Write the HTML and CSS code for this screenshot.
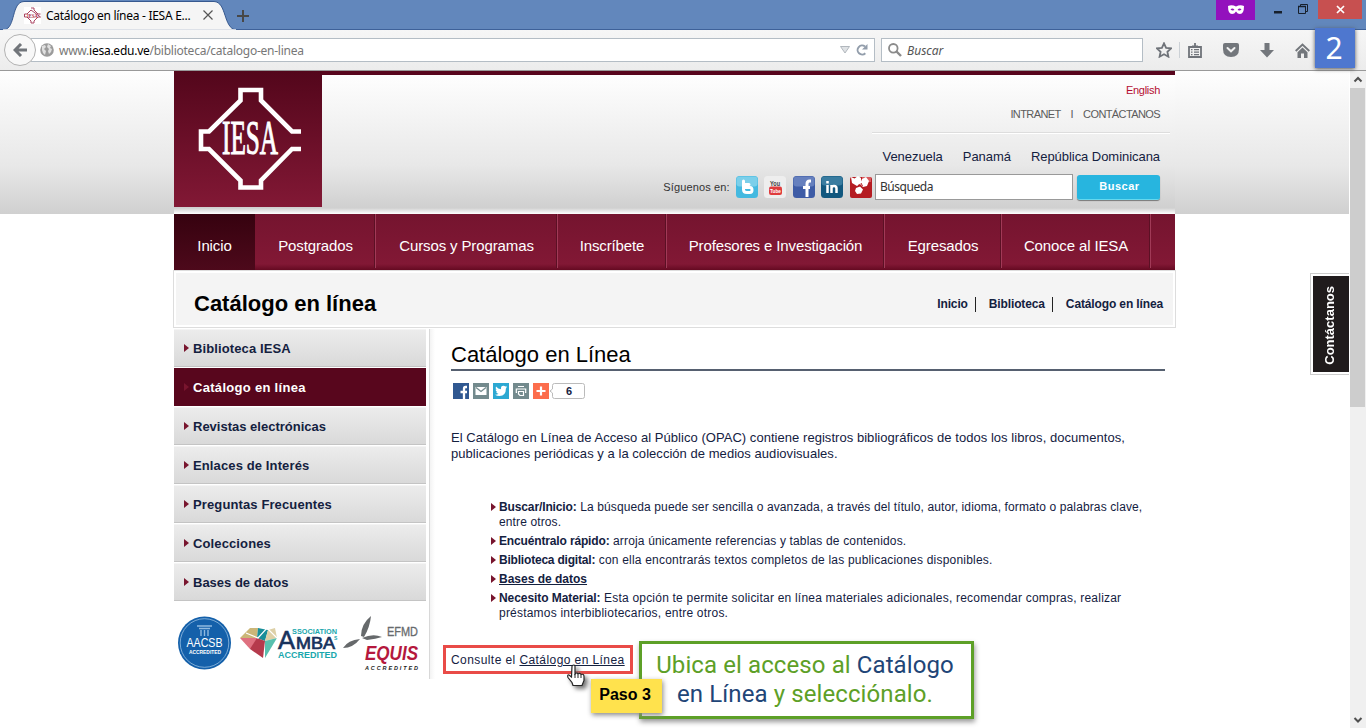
FILE: index.html
```html
<!DOCTYPE html>
<html lang="es">
<head>
<meta charset="utf-8">
<title>Catálogo en línea - IESA</title>
<link rel="stylesheet" href="styles.css">
</head>
<body>
<header class="titlebar">
  <svg class="tab-shape" width="238" height="30" viewBox="0 0 238 30"><path d="M4 30C16 28 11 2 24 1.5H214C227 2 223 28 236 30Z" fill="#f5f5f5" stroke="#37598f"/><path d="M0 29.5H6M234 29.5H238" stroke="#3e6199"/><path d="M3 30H236" stroke="#f5f5f5" stroke-width="1.5"/></svg>
  <div class="tab">
    <svg width="17" height="17" viewBox="0 0 17 17"><rect width="17" height="17" fill="#fff"/><path d="M7 1h3v2l4 4h2.500M16.500 10H14l-4 4v2H7v-2l-4-4H.5V7H3l4-4z" fill="none" stroke="#aa4562"/><text x="3" y="10.500" class="mini-logo" textLength="11" lengthAdjust="spacingAndGlyphs">IESA</text></svg>
    <span class="tab-title">Catálogo en línea - IESA E...</span>
    <svg class="tab-close" width="12" height="12" viewBox="0 0 12 12"><path d="M1.500 1.500l9 9m0-9l-9 9" stroke="#555" stroke-width="1.200"/></svg>
  </div>
  <svg class="new-tab" width="12" height="12" viewBox="0 0 12 12"><path d="M6 0v12M0 6h12" stroke="#484848" stroke-width="2"/></svg>
  <div class="private"><svg width="16" height="10" viewBox="0 0 16 10"><path d="M0 1Q4-.5 8 1.500Q12-.5 16 1Q16 9 12 9Q9.500 9 8 6.500Q6.500 9 4 9Q0 9 0 1Z" fill="#fff"/><path d="M2.500 4.500Q4.500 2.500 6.500 5Q4.500 6 2.500 4.500M9.500 5Q11.500 2.500 13.500 4.500Q11.500 6 9.500 5" fill="#9311bd"/></svg></div>
  <div class="win-buttons">
    <svg width="8" height="3" class="min"><rect width="8" height="2.500" fill="#17202c"/></svg>
    <svg width="10" height="10" viewBox="0 0 10 10"><path d="M.5 2.500h7v7h-7zM2.500 2V.5h7v7H8" fill="none" stroke="#17202c"/><path d="M0 2.500h8" stroke="#17202c" stroke-width="1.500"/></svg>
  </div>
  <div class="win-close"><svg width="9" height="9" viewBox="0 0 9 9"><path d="M1 1l7 7M8 1L1 8" stroke="#fff" stroke-width="1.700"/></svg></div>
</header>

<div class="toolbar">
  <div class="back"><svg width="15" height="14" viewBox="0 0 15 14"><path d="M8 1L2 7l6 6M2.500 7H14" fill="none" stroke="#71757a" stroke-width="3"/></svg></div>
  <div class="url">
    <svg width="14" height="14" viewBox="0 0 14 14"><circle cx="7" cy="7" r="6.800" fill="#9b9b9b"/><path d="M2 3l3-1 1 2-2 2 2 2-1 4-2-2-1-3zM8 1l3 2-1 2 2 1-1 3-2 2-1-3 1-2-2-2z" fill="#e0e0e0"/></svg>
    <span class="address">www.<b>iesa.edu.ve</b>/biblioteca/catalogo-en-linea</span>
    <svg width="10" height="8" viewBox="0 0 10 8"><path d="M.5.5h9L5 7z" fill="#dfe2e5" stroke="#b1b7bd"/></svg>
    <svg class="reload" width="12" height="12" viewBox="0 0 12 12"><path d="M9.300 9.200A4.500 4.500 0 1 1 9 2.600" fill="none" stroke="#929dab" stroke-width="2"/><path d="M11.500 0v5.500H6z" fill="#929dab"/></svg>
  </div>
  <div class="search">
    <svg width="14" height="14" viewBox="0 0 14 14"><circle cx="5.300" cy="5.300" r="4.300" fill="none" stroke="#8b8b8b" stroke-width="1.800"/><path d="M8.500 8.500l4.500 4.500" stroke="#8b8b8b" stroke-width="2.400"/></svg>
    <span>Buscar</span>
  </div>
  <div class="tools">
    <svg width="16" height="16" viewBox="0 0 16 16"><path d="M8 1.300l2.100 4.500 4.900.6-3.600 3.400 1 4.900L8 12.300l-4.400 2.400 1-4.900L1 6.400l4.900-.6z" fill="none" stroke="#6f7379" stroke-width="1.800"/></svg>
    <i></i>
    <svg width="14" height="15" viewBox="0 0 14 15"><path d="M1 4h12v10H1zM4 3.500h6M7 0v4" fill="none" stroke="#6f7379" stroke-width="1.800"/><path d="M3 6.700h1.500M6 6.700h5M3 9.200h1.500M6 9.200h5M3 11.600h1.500M6 11.600h5" stroke="#6f7379" stroke-width="1.200"/></svg>
    <svg width="16" height="14" viewBox="0 0 16 14"><path d="M2 0h12q2 0 2 2v4q0 8-8 8T0 6V2Q0 0 2 0z" fill="#73777c"/><path d="M4.500 5L8 8.300 11.500 5" fill="none" stroke="#f2f2f2" stroke-width="2" stroke-linecap="round"/></svg>
    <svg width="14" height="15" viewBox="0 0 14 15"><path d="M4.500 0h5v7H14l-7 7.500L0 7h4.500z" fill="#73777c"/></svg>
    <svg width="15" height="15" viewBox="0 0 15 15"><path d="M.7 8L7.500 1.500 14.300 8" fill="none" stroke="#73777c" stroke-width="1.900"/><path d="M2.500 9.200L7.500 4.400l5 4.800V15H9v-4.500H6V15H2.500z" fill="#73777c"/></svg>
  </div>
</div>

<div class="step-badge">2</div>

<div class="viewport">
<main class="page">
  <div class="container">
    <div class="masthead">
      <div class="logo">
        <svg width="148" height="136" viewBox="0 0 148 136"><path d="M127 60.500H118L87 29.500V19H66.500V29.500L35 60.500H27V78H35L66.500 109.500V116.500H87V109.500L118 78H127" fill="none" stroke="#fff" stroke-width="4.600"/><text x="48" y="83" class="logo-text" textLength="56" lengthAdjust="spacingAndGlyphs">IESA</text></svg>
      </div>
      <div class="head-right">
        <a class="english">English</a>
        <div class="util"><a>INTRANET</a><span>I</span><a>CONTÁCTANOS</a></div>
        <div class="countries"><a>Venezuela</a><a>Panamá</a><a>República Dominicana</a></div>
        <div class="follow">
          <span class="follow-label">Síguenos en:</span>
          <svg width="22" height="22" viewBox="0 0 22 22"><rect width="22" height="22" rx="3.500" fill="#44b9e0"/><rect x=".5" y=".5" width="21" height="10" rx="3" fill="#7bcfea"/><path d="M7.500 5v8.500q0 3 3.500 3h3q2 0 2-2.500t-2-2.500H9M8 8.500h5" fill="none" stroke="#fff" stroke-width="3" stroke-linecap="round"/></svg>
          <svg width="22" height="22" viewBox="0 0 22 22"><rect width="22" height="22" rx="3.500" fill="#eee"/><text x="6" y="9.500" class="you" textLength="10" lengthAdjust="spacingAndGlyphs">You</text><rect x="5" y="10.500" width="13" height="8.500" rx="2" fill="#df3c3c"/><text x="6" y="17" class="tube" textLength="11" lengthAdjust="spacingAndGlyphs">Tube</text></svg>
          <svg width="22" height="22" viewBox="0 0 22 22"><rect width="22" height="22" rx="3.500" fill="#3e5ca6"/><rect x=".5" y=".5" width="21" height="10" rx="3" fill="#6680be"/><path d="M18 5h-1.500q-2.500 0-2.500 3v13M10 11.500h7" fill="none" stroke="#fff" stroke-width="3"/></svg>
          <svg width="22" height="22" viewBox="0 0 22 22"><rect width="22" height="22" rx="3.500" fill="#12587f"/><rect x=".5" y=".5" width="21" height="9" rx="3" fill="#397ca0"/><path d="M6.500 9v8M6.500 5v2.500M10.500 17V9M10.500 12q0-2 2.500-2t2.500 2.500V17" fill="none" stroke="#fff" stroke-width="2.500"/></svg>
          <svg width="22" height="22" viewBox="0 0 22 22"><rect y="1" width="22" height="21" rx="2" fill="#b51c22"/><path d="M12 1h9v5h-9z" fill="#d8575b"/><path d="M1 1l3.500 1.500L8 0l3 2v5l-4 3-5-3zM12 3l4-2 3 4-2 5-4 1-3-3zM6 12l4-1.500 3 3-2 4-4 .5-2-3z" fill="#fff"/><path d="M11 7l1.500 3M10 10l-2-1" stroke="#b51c22"/></svg>
          <div class="site-search">Búsqueda</div>
          <div class="site-button">Buscar</div>
        </div>
      </div>
    </div>

    <nav class="menu">
      <a class="m1">Inicio</a><a class="m2">Postgrados</a><a class="m3">Cursos y Programas</a><a class="m4">Inscríbete</a><a class="m5">Profesores e Investigación</a><a class="m6">Egresados</a><a class="m7">Conoce al IESA</a><a class="m8"></a>
    </nav>

    <div class="heading">
      <h1>Catálogo en línea</h1>
      <div class="crumbs"><a>Inicio</a><a>Biblioteca</a><a>Catálogo en línea</a></div>
    </div>

    <div class="columns">
      <aside class="sidebar">
        <a>Biblioteca IESA</a>
        <a class="active">Catálogo en línea</a>
        <a class="tight">Revistas electrónicas</a>
        <a>Enlaces de Interés</a>
        <a>Preguntas Frecuentes</a>
        <a>Colecciones</a>
        <a class="tight">Bases de datos</a>
        <svg class="seals" width="252" height="70" viewBox="174 608 252 70">
          <circle cx="204.500" cy="643" r="26.500" fill="#1460aa"/><circle cx="204.500" cy="643" r="24.300" fill="none" stroke="#a8cbea" stroke-width=".7"/>
          <path d="M197 626h15M199 628.500h11M201 630v6M204.500 630v6M208 630v6" stroke="#8fb9df" stroke-width="1.400"/>
          <text x="186.500" y="647" fill="#fff" font-size="12.500" textLength="36" lengthAdjust="spacingAndGlyphs">AACSB</text>
          <text x="189" y="653.500" fill="#fff" font-size="5" font-weight="bold" textLength="32" lengthAdjust="spacingAndGlyphs">ACCREDITED</text>
          <path d="M250 628l8 0-1 10-17 0z" fill="#cbb678"/><path d="M258 628l10 2-3 11-8-3z" fill="#188e99"/><path d="M268 630l7-2 2 10-12 3z" fill="#ddd0a7"/><path d="M240 638h17v10l-7 1z" fill="#df7180"/><path d="M257 638l8 3-2 17-13-9z" fill="#b53a4c"/><path d="M265 641l12-3-12 20z" fill="#59c0ae"/><path d="M246 633l12 5 9-10 10 10" fill="none" stroke="#fff" stroke-width="1.200"/>
          <text x="278" y="649" fill="#17325c" font-size="26" stroke="#17325c" stroke-width=".6" textLength="17" lengthAdjust="spacingAndGlyphs">A</text>
          <text x="296" y="649" fill="#17325c" font-size="17" textLength="39" lengthAdjust="spacingAndGlyphs" stroke="#17325c" stroke-width=".7">MBA</text>
          <text x="292" y="634" fill="#18a7ad" font-size="7.500" font-weight="bold" textLength="45" lengthAdjust="spacingAndGlyphs">SSOCIATION</text>
          <text x="334" y="639.500" fill="#18a7ad" font-size="5" font-weight="bold">S</text>
          <text x="278" y="658" fill="#18a7ad" font-size="9" font-weight="bold" textLength="59" lengthAdjust="spacingAndGlyphs">ACCREDITED</text>
          <path d="M371 616q-10 8-10 20l3 1q6-10 7-21zM362 638l5 2q9-1 15-3-9-4-20 1zM360 639q-12 1-17 9 10 0 17-9z" fill="#66696b"/>
          <text x="387" y="636" fill="#676a6d" font-size="12.500" stroke="#676a6d" stroke-width=".3" textLength="31" lengthAdjust="spacingAndGlyphs">EFMD</text>
          <text x="365" y="660" fill="#b5183d" font-size="19.500" font-style="italic" font-weight="bold" textLength="53" lengthAdjust="spacingAndGlyphs">EQUIS</text>
          <text x="365" y="670" fill="#222" font-size="5.500" font-style="italic" font-weight="bold" textLength="53">ACCREDITED</text>
        </svg>
      </aside>
      <div class="divider"></div>
      <article class="content">
        <h2>Catálogo en Línea</h2>
        <div class="share">
          <svg width="16" height="16" viewBox="0 0 16 16"><rect width="16" height="16" fill="#305891"/><path d="M14 4h-1.500Q11 4 11 6v10M7.500 9H14" fill="none" stroke="#fff" stroke-width="2.300"/></svg>
          <svg width="16" height="16" viewBox="0 0 16 16"><rect width="16" height="16" fill="#738a8d"/><rect x="2.500" y="4" width="11" height="8" fill="#fff"/><path d="M3 4.500l5 4 5-4" fill="none" stroke="#738a8d" stroke-width="1.300"/></svg>
          <svg width="16" height="16" viewBox="0 0 16 16"><rect width="16" height="16" fill="#2ca8d2"/><path d="M2 11.800q2 .2 3.500-1Q3.700 10.500 3.200 9l1 0Q2.600 8 2.600 6.400l1 .3Q2 5.200 3 3.500 5 6 8 6.200q-.4-3.500 2.600-3.400 1 0 1.700.8l1.600-.6-1 1.500 1.300-.3-1.300 1.400Q13 13 6.500 13 4 13 2 11.800z" fill="#fff"/></svg>
          <svg width="16" height="16" viewBox="0 0 16 16"><rect width="16" height="16" fill="#738a8d"/><path d="M5 3.500h6M4 9.500H3.300V6h9.400v3.500H12M5.500 8.500h5v4H7L5.500 11z" fill="none" stroke="#fff" stroke-width="1.200"/></svg>
          <svg width="16" height="16" viewBox="0 0 16 16"><rect width="16" height="16" fill="#fc6d4c"/><path d="M8 3.500v9M3.500 8h9" stroke="#fff" stroke-width="2.200"/></svg>
          <span class="count"><svg width="36" height="17" viewBox="0 0 36 17"><path d="M3.500 2.500q0-2 2-2h28q2 0 2 2v11q0 2-2 2h-28q-2 0-2-2V10L1 8l2.500-2z" fill="#fff" stroke="#bbb"/></svg><b>6</b></span>
        </div>
        <p class="intro"><span class="l1">El Catálogo en Línea de Acceso al Público (OPAC) contiene registros bibliográficos de todos los libros, documentos,</span><br><span class="l2">publicaciones periódicas y a la colección de medios audiovisuales.</span></p>
        <ul>
          <li class="i1"><b>Buscar/Inicio:</b> La búsqueda puede ser sencilla o avanzada, a través del título, autor, idioma, formato o palabras clave,<br>entre otros.</li>
          <li class="i2"><b>Encuéntralo rápido:</b> arroja únicamente referencias y tablas de contenidos.</li>
          <li><b>Biblioteca digital:</b> con ella encontrarás textos completos de las publicaciones disponibles.</li>
          <li class="i4"><b><u>Bases de datos</u></b></li>
          <li class="i5"><b>Necesito Material:</b> Esta opción te permite solicitar en línea materiales adicionales, recomendar compras, realizar<br>préstamos interbibliotecarios, entre otros.</li>
        </ul>
        <p class="consult">Consulte el <u>Catálogo en Línea</u></p>
      </article>
    </div>
  </div>
</main>
<div class="scrollbar">
  <svg width="16" height="17" viewBox="0 0 16 17"><path d="M4.500 10.500L8 7l3.500 3.500" fill="none" stroke="#505050" stroke-width="2"/></svg>
  <div class="thumb"></div>
  <svg class="down" width="16" height="17" viewBox="0 0 16 17"><path d="M4.500 7L8 10.500 11.500 7" fill="none" stroke="#505050" stroke-width="2"/></svg>
</div>
</div>

<div class="contact-tab"><div><span>Contáctanos</span></div></div>
<div class="highlight"></div>
<div class="callout"><div class="c1">Ubica el acceso al <b>Catálogo</b></div><div class="c2"><b>en Línea</b> y selecciónalo.</div></div>
<div class="step-note">Paso 3</div>
<svg class="hand" width="24" height="28" viewBox="0 0 24 28"><path d="M6 2q2-2 3 0v8q2-2 3 0 2-1.500 3 .5 3-1 3 2v4l-2 5H7l-1-3-4-5q-1-3 1-2.500l2.500 2z" fill="#fff" stroke="#252525" stroke-width="1.200"/><path d="M9 10v4M12 10.500V14M15 11v3" stroke="#252525"/></svg>
</body>
</html>
```
FILE: styles.css
```css
* { box-sizing: border-box; }
body { margin: 0; width: 1366px; height: 728px; overflow: hidden; position: relative; display: flex; flex-direction: column; background: #fff; font-family: "Liberation Sans", Arial, sans-serif; color: #14213f; }
svg { display: block; flex: none; }
h1, h2, p, ul { margin: 0; padding: 0; }

/* Browser window */
.titlebar { height: 30px; flex: none; display: flex; background: #6287bc; border-bottom: 1px solid #3e6199; position: relative; }
.tab-shape { position: absolute; left: 0; top: 0; }
.tab { position: relative; width: 236px; height: 30px; padding-left: 24px; display: flex; align-items: center; }
.mini-logo { font: bold 6px "Liberation Serif", serif; fill: #aa2748; }
.tab-title { width: 160px; margin-left: 5px; font: 12px "Noto Sans", sans-serif; letter-spacing: -.28px; color: #000; white-space: nowrap; }
.tab-close { margin-left: -4px; }
.new-tab { margin: 10px 0 0 1px; }
.private { width: 39px; height: 20px; margin-left: 967px; background: #9311bd; display: flex; justify-content: center; align-items: center; }
.win-buttons { width: 63px; height: 20px; display: flex; justify-content: space-between; padding: 4px 10px 0 19px; }
.win-buttons .min { margin-top: 7px; }
.win-close { width: 44px; height: 19px; background: #c75050; display: flex; align-items: center; justify-content: center; }
.toolbar { height: 41px; flex: none; display: flex; align-items: center; background: linear-gradient(#f6f6f6, #ececec); border-bottom: 1px solid #999; }
.back { z-index: 1; width: 32px; height: 32px; margin-left: 4px; border: 1px solid #b2b2b2; border-radius: 50%; background: #f8f8f8; display: flex; align-items: center; justify-content: center; }
.url { height: 24px; width: 844px; margin-left: -5px; padding: 0 6px 0 9px; background: #fff; border: 1px solid #b4bdc5; display: flex; align-items: center; border-left: 0; }
.address { flex: 1; margin-left: 5px; font: 12px "Noto Sans", sans-serif; color: #777; letter-spacing: -.25px; }
.address b { font-weight: 400; color: #000; }
.reload { margin-left: 6px; }
.search { width: 262px; height: 24px; margin-left: 6px; padding-left: 6px; background: #fff; border: 1px solid #b4bdc5; display: flex; align-items: center; gap: 5px; font: italic 12px "Noto Sans", sans-serif; color: #555; }
.tools { display: flex; align-items: center; margin-left: 13px; gap: 21px; }
.tools i { width: 1px; height: 16px; background: #ccd1d6; margin: 0 -13px 0 -14px; }
.step-badge { position: absolute; z-index: 3; left: 1315px; top: 28px; width: 40px; height: 40px; background: #4e77cf; box-shadow: 0 1px 4px #555; color: #fff; font: 30px/40px "Noto Sans", sans-serif; padding-right: 2px; text-align: center; }

/* Page */
.viewport { height: 657px; display: flex; }
.page { width: 1349px; background: linear-gradient(#fefefe, #e8e8e8 94px, #d0d0d0 143px, #fff 143px); }
.container { width: 1001px; margin-left: 174px; }
.masthead { height: 143px; display: flex; background: linear-gradient(#58061d 4px, #fefefe 4px, #e8e8e8 94px, #d0d0d0 136px, #d0d0d0 137px, #fff 143px); }
.logo { width: 148px; height: 136px; background: linear-gradient(#53061b, #821835); }
.logo-text { font: 48px "Liberation Serif", serif; fill: #fff; stroke: #fff; stroke-width: 1.1px; }
.head-right { flex: 1; display: flex; flex-direction: column; align-items: flex-end; padding: 13px 15px 0 0; }
.english { color: #b40d31; font-size: 11px; line-height: 13px; letter-spacing: -.3px; }
.util { width: 298px; margin-right: -10px; height: 36px; padding: 11px 10px 0 0; font-size: 11px; line-height: 13px; display: flex; justify-content: flex-end; gap: 10px; color: #5b5b5b; border-bottom: 1px solid #ddd; box-shadow: 0 1px #fff; letter-spacing: -.6px; }
.countries { display: flex; gap: 20px; font-size: 13px; line-height: 16px; margin-top: 16px; letter-spacing: -.05px; }
.follow { display: flex; align-items: center; margin-top: 9px; height: 26px; font-size: 11px; color: #333; }
.follow-label { margin-right: 6px; letter-spacing: .12px; }
.follow > svg { margin-right: 6.6px; }
.follow > svg:nth-of-type(5) { margin-right: 3px; }
.you { font: bold 7.5px "Liberation Sans", sans-serif; fill: #444; }
.tube { font: bold 6px "Liberation Sans", sans-serif; fill: #fff; }
.site-search { width: 198px; height: 26px; background: #fff; border: 1px solid #999; padding-left: 4px; font: 12px/24px "Noto Sans", sans-serif; letter-spacing: -.45px; }
.site-button { margin-left: 4px; width: 83px; height: 25px; border-radius: 3px; background: #27b5df; border-bottom: 1px solid #65d9ef; box-shadow: 0 1px 1px #777; color: #fff; font-weight: bold; text-align: center; line-height: 22px; padding-left: 2px; letter-spacing: .5px; }
.menu { height: 56px; display: flex; background: linear-gradient(#75142f, #821835 50px, #650a22); color: #fff; font-size: 15px; line-height: 63px; text-align: center; letter-spacing: -.12px; }
.menu a { border-left: 1px solid #a13a57; border-right: 1px solid #5b1024; height: 54px; white-space: nowrap; padding-left: 1px; }
.menu .m1 { width: 81px; height: 56px; border: 0; background: linear-gradient(#36020f, #4d091b); padding-left: 0; }
.menu .m2 { width: 120px; border-left: 0; padding-left: 2px; }
.m3 { width: 182px; } .m4 { width: 109px; } .m5 { width: 218px; } .m6 { width: 117px; } .m7 { width: 149px; }
.menu .m8 { width: 25px; border-right: 0; }
.heading { width: 1003px; height: 58px; margin-left: -1px; display: flex; justify-content: space-between; align-items: center; border: 1px solid #ddd; background: #f4f4f4; box-shadow: inset 0 0 0 2px #fff; padding: 10px 12px 0 20px; }
h1 { font-size: 22px; line-height: 26px; color: #000; }
.crumbs { display: flex; font-size: 12px; font-weight: bold; line-height: 15px; letter-spacing: -.13px; }
.crumbs a + a { border-left: 1px solid #222; margin-left: 7px; padding-left: 13px; }
.columns { display: flex; padding-top: 1px; }
.sidebar { width: 252px; display: flex; flex-direction: column; gap: 1px; }
.sidebar a { height: 38px; background: linear-gradient(#ececec, #d9d9d9); border-top: 1px solid #f4f4f4; border-bottom: 1px solid #c4c4c4; padding-left: 10px; display: flex; align-items: center; gap: 4px; font-size: 13px; font-weight: bold; letter-spacing: .12px; }
.sidebar .tight { letter-spacing: 0; }
.sidebar a::before, li::before { content: ""; border: 4px solid transparent; border-left: 5px solid #78152e; border-right: 0; }
.sidebar a.active { background: #58061d; border-color: #58061d; color: #fff; letter-spacing: .3px; }
.seals { margin-top: 6px; font-family: "Liberation Sans", sans-serif; }
.divider { width: 6px; height: 350px; margin-left: 3px; border-left: 1px solid #d8d8d8; background: linear-gradient(90deg, #f3f3f3, #fff); }
.content { width: 714px; margin-left: 16px; }
h2 { height: 42px; border-bottom: 2px solid #566070; padding-top: 12px; font-size: 22px; line-height: 27px; font-weight: 400; color: #000; }
.share { height: 17px; margin: 12px 0 0 2px; display: flex; gap: 4px; }
.count { position: relative; margin-left: -4px; font-size: 11px; line-height: 17px; }
.count b { position: absolute; left: 17px; top: 0; }
.intro { margin-top: 30px; font-size: 13px; line-height: 16px; white-space: nowrap; letter-spacing: .043px; }
ul { list-style: none; padding: 38px 0 0 40px; font-size: 12px; line-height: 15px; white-space: nowrap; display: flex; flex-direction: column; gap: 4px; }
li { position: relative; padding-left: 8px; letter-spacing: .2px; }
li b { letter-spacing: -.2px; }
.i1 { letter-spacing: .12px; }
.i1 b { letter-spacing: -.12px; }
.i2 { letter-spacing: .16px; }
.i2 b { letter-spacing: -.15px; }
.i4 b { letter-spacing: 0; }
.i5 { letter-spacing: .21px; }
.i5 b { letter-spacing: -.07px; }
li::before { position: absolute; left: 0; top: 3px; }
.consult { margin-top: 31px; font-size: 12px; line-height: 16px; letter-spacing: .42px; }
.scrollbar { width: 16px; margin-left: 1px; background: #f0f0f0; display: flex; flex-direction: column; }
.thumb { height: 319px; background: #cdcdcd; width: 15px; }
.down { margin-top: auto; }

/* Floating tutorial marks */
.contact-tab { position: absolute; left: 1310px; top: 273px; width: 39px; height: 102px; border: 1px solid #ccc; border-right: 0; padding: 2px 0 2px 2px; background: #fff; }
.contact-tab div { height: 96px; background: #201b1c; display: flex; align-items: center; justify-content: center; color: #fff; font-size: 13px; font-weight: bold; padding: 2px 3px 0 0; }
.contact-tab span { writing-mode: vertical-rl; transform: rotate(180deg); }
.highlight { position: absolute; left: 443px; top: 645px; width: 190px; height: 29px; border: 3px solid #e94b47; }
.callout { position: absolute; left: 639px; top: 641px; width: 335px; height: 78px; border: 3px solid #5da027; background: #fff; box-shadow: 1px 3px 5px #999; color: #5da027; font: 24px/29px Roboto, sans-serif; letter-spacing: .1px; padding: 7px 3px 0 0; text-align: center; white-space: nowrap; }
.callout b { font-weight: 400; color: #214577; }
.step-note { position: absolute; left: 591px; top: 679px; width: 71px; height: 34px; background: #ffe24d; box-shadow: 1px 2px 5px #888; color: #000; font-size: 16px; line-height: 31px; font-weight: bold; text-align: center; padding-right: 3px; }
.hand { position: absolute; left: 566px; top: 664px; filter: drop-shadow(3px 3px 2px #777); }
```
